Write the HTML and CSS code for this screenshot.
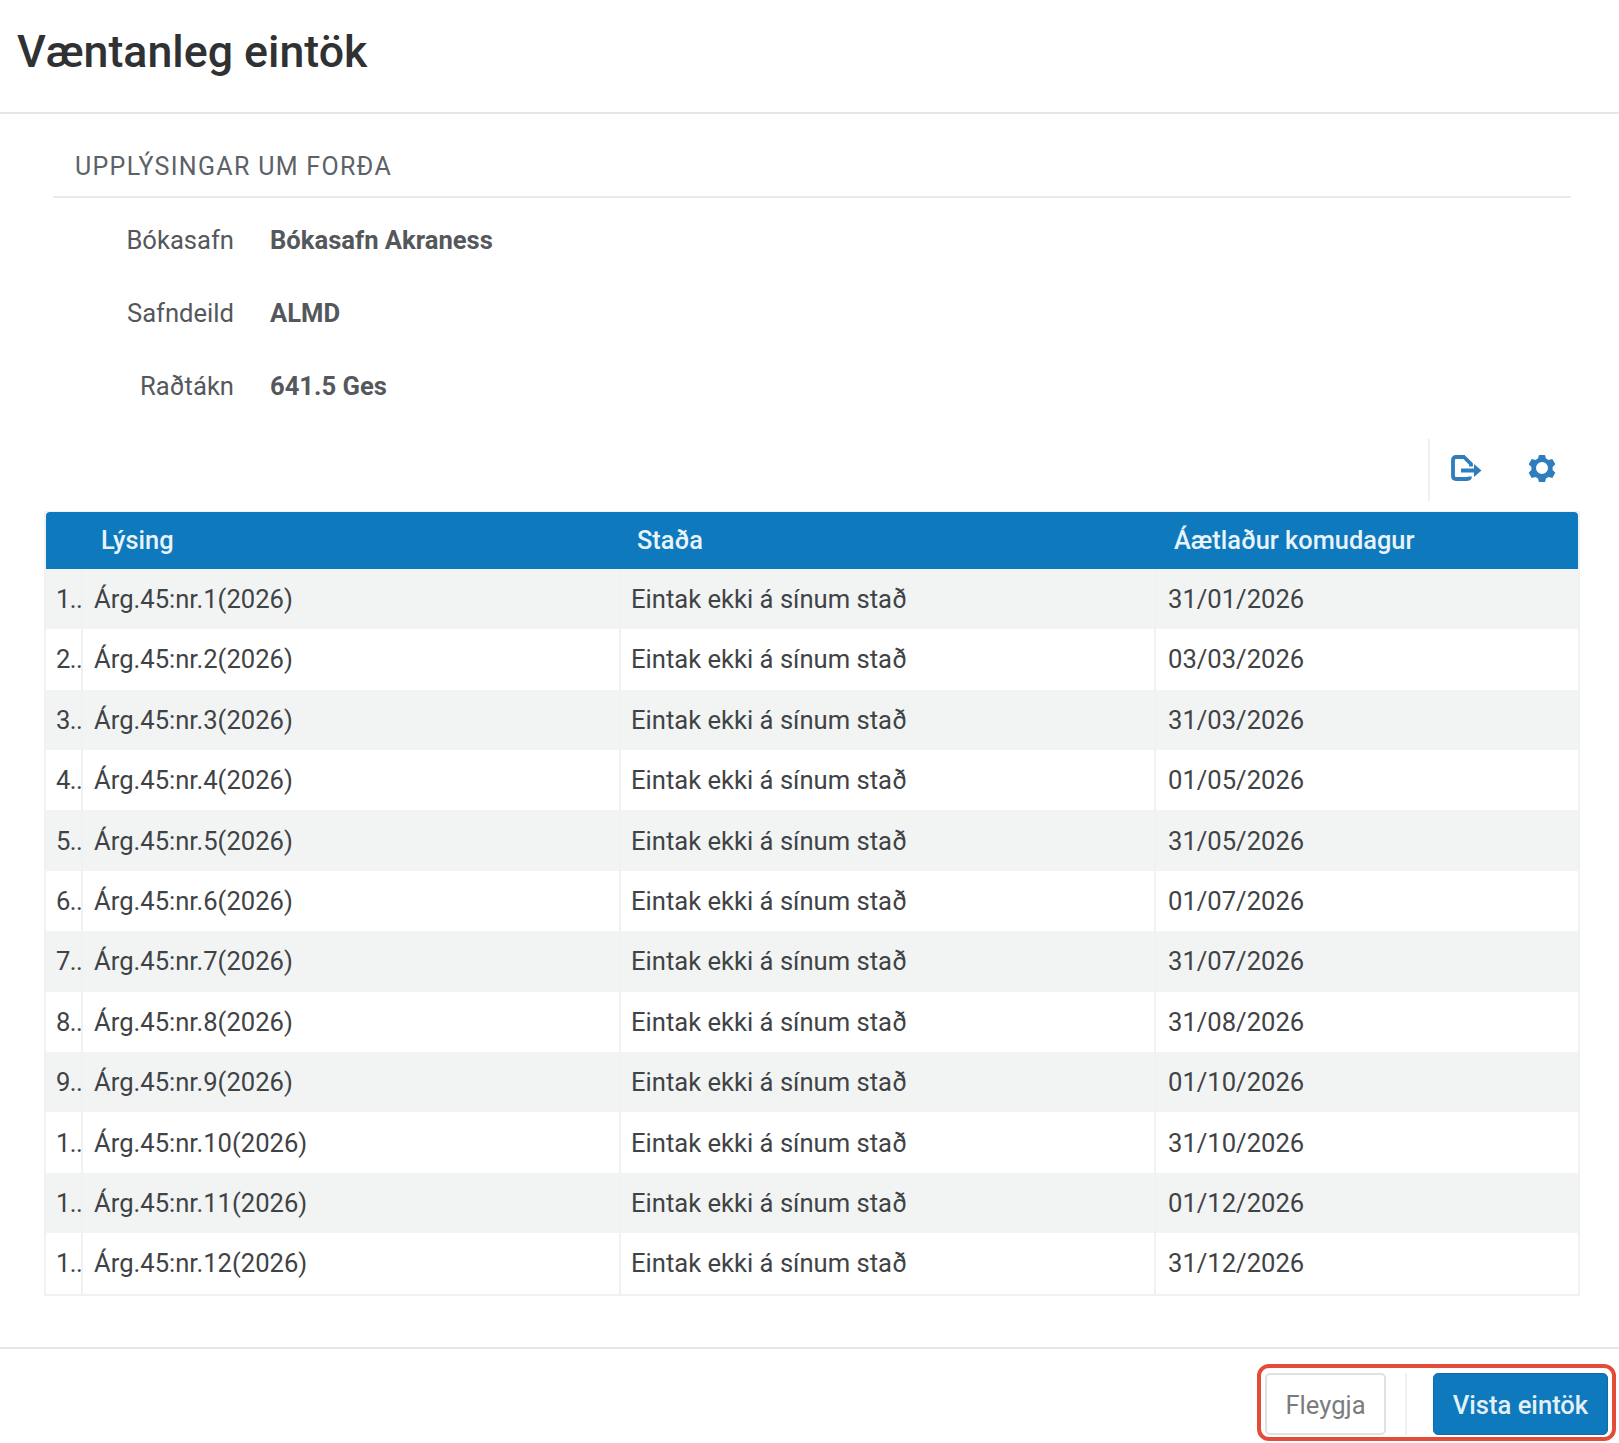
FILE: index.html
```html
<!DOCTYPE html>
<html lang="is">
<head>
<meta charset="utf-8">
<title>Væntanleg eintök</title>
<link rel="stylesheet" href="styles.css">
</head>
<body>
<div class="dialog">
  <header class="head"><h1>Væntanleg eintök</h1></header>
  <main class="content">
    <section class="info">
      <h2>UPPLÝSINGAR UM FORÐA</h2>
      <dl class="fields">
        <div class="field"><dt>Bókasafn</dt><dd>Bókasafn Akraness</dd></div>
        <div class="field"><dt>Safndeild</dt><dd>ALMD</dd></div>
        <div class="field"><dt>Raðtákn</dt><dd>641.5 Ges</dd></div>
      </dl>
    </section>
    <div class="toolbar">
      <div class="tools">
        <svg class="icon" viewBox="0 0 32 28" width="32" height="28" aria-hidden="true"><path d="M15 3H6Q3 3 3 6V22Q3 25 6 25H17Q20 25 20 22.500" fill="none" stroke="#2f7dbd" stroke-width="3.800"/><path d="M14 3 21 10V12.500" fill="none" stroke="#2f7dbd" stroke-width="3.800"/><path d="M11 14.500H24V10L31.500 16.500 24 23V18.500H11Z" fill="#2f7dbd"/></svg>
        <svg class="icon gear" viewBox="0 0 28 28" width="28" height="28" aria-hidden="true"><path fill="#2f7dbd" fill-rule="evenodd" d="M11 1h6l1 3.600 2.600 1.500 3.700-1 3 5.200-2.700 2.600v3.200l2.700 2.600-3 5.200-3.700-1-2.600 1.500-1 3.600h-6l-1-3.600-2.600-1.500-3.700 1-3-5.200 2.700-2.600v-3.200l-2.700-2.600 3-5.200 3.700 1 2.600-1.500zM14 8a6 6 0 1 0 0 12 6 6 0 0 0 0-12z"/></svg>
      </div>
    </div>
    <div class="grid">
      <div class="row header"><span class="c num"></span><span class="c">Lýsing</span><span class="c">Staða</span><span class="c">Áætlaður komudagur</span></div>
      <div class="row"><span class="c num">1..</span><span class="c">Árg.45:nr.1(2026)</span><span class="c">Eintak ekki á sínum stað</span><span class="c">31/01/2026</span></div>
      <div class="row"><span class="c num">2..</span><span class="c">Árg.45:nr.2(2026)</span><span class="c">Eintak ekki á sínum stað</span><span class="c">03/03/2026</span></div>
      <div class="row"><span class="c num">3..</span><span class="c">Árg.45:nr.3(2026)</span><span class="c">Eintak ekki á sínum stað</span><span class="c">31/03/2026</span></div>
      <div class="row"><span class="c num">4..</span><span class="c">Árg.45:nr.4(2026)</span><span class="c">Eintak ekki á sínum stað</span><span class="c">01/05/2026</span></div>
      <div class="row"><span class="c num">5..</span><span class="c">Árg.45:nr.5(2026)</span><span class="c">Eintak ekki á sínum stað</span><span class="c">31/05/2026</span></div>
      <div class="row"><span class="c num">6..</span><span class="c">Árg.45:nr.6(2026)</span><span class="c">Eintak ekki á sínum stað</span><span class="c">01/07/2026</span></div>
      <div class="row"><span class="c num">7..</span><span class="c">Árg.45:nr.7(2026)</span><span class="c">Eintak ekki á sínum stað</span><span class="c">31/07/2026</span></div>
      <div class="row"><span class="c num">8..</span><span class="c">Árg.45:nr.8(2026)</span><span class="c">Eintak ekki á sínum stað</span><span class="c">31/08/2026</span></div>
      <div class="row"><span class="c num">9..</span><span class="c">Árg.45:nr.9(2026)</span><span class="c">Eintak ekki á sínum stað</span><span class="c">01/10/2026</span></div>
      <div class="row"><span class="c num">1..</span><span class="c">Árg.45:nr.10(2026)</span><span class="c">Eintak ekki á sínum stað</span><span class="c">31/10/2026</span></div>
      <div class="row"><span class="c num">1..</span><span class="c">Árg.45:nr.11(2026)</span><span class="c">Eintak ekki á sínum stað</span><span class="c">01/12/2026</span></div>
      <div class="row"><span class="c num">1..</span><span class="c">Árg.45:nr.12(2026)</span><span class="c">Eintak ekki á sínum stað</span><span class="c">31/12/2026</span></div>
    </div>
  </main>
  <footer class="foot">
    <div class="actions">
      <button class="btn ghost">Fleygja</button>
      <span class="sep"></span>
      <button class="btn primary">Vista eintök</button>
    </div>
  </footer>
</div>
</body>
</html>
```

FILE: styles.css
```css
* { box-sizing: border-box; }
html, body { margin: 0; padding: 0; background: #fff; }
body { font-family: Roboto, "Liberation Sans", sans-serif; color: #3b3f42; height: 1443px; overflow: hidden; }
.dialog { display: flex; flex-direction: column; height: 1443px; }
.head { height: 114px; border-bottom: 2px solid #e3e7ea; padding: 0 17px; display: flex; align-items: center; }
.head h1 { margin: 0 0 6px; font-size: 44.7px; font-weight: 500; color: #2f3133; line-height: 1.2; }
.content { flex: 1; padding: 0 39px 0 44px; }
.info { padding: 0 9px; }
.info h2 { margin: 0; padding: 38px 0 0 22px; height: 84px; border-bottom: 2px solid #e8ebed; font-size: 25px; font-weight: 400; letter-spacing: 1.3px; color: #5c6267; line-height: 30px; }
.fields { margin: 0; padding-top: 5px; }
.field { display: flex; height: 73.3px; align-items: center; font-size: 25.6px; }
.field dt { width: 181px; text-align: right; color: #54585c; }
.field dd { margin: 0 0 0 36px; font-weight: 700; color: #54585c; }
.toolbar { display: flex; justify-content: flex-end; height: 67px; margin-top: 16px; }
.tools { display: flex; align-items: center; width: 152px; border-left: 2px solid #eef0f2; padding: 0 0 4px 20px; gap: 46px; height: 62px; }
.icon { display: block; }
.grid { border: 2px solid #f0f2f2; border-top-width: 1px; margin-top: 5px; }
.row { display: grid; grid-template-columns: 35px 538px 535px 1fr; height: 60.4px; align-items: stretch; font-size: 25.6px; color: #3f4346; }
.row:nth-child(even) { background: #f2f4f4; }
.row .c { display: flex; align-items: center; padding-left: 12px; border-left: 2px solid #f0f2f2; white-space: nowrap; }
.row .c:first-child { border-left: 0; }
.row .c:nth-child(2) { padding-left: 11px; }
.row .c:nth-child(3) { padding-left: 10px; }
.row .num { padding-left: 10px; letter-spacing: -0.6px; }
.row.header { height: 57px; background: #0e7abd; color: #e9f3fa; font-size: 25.4px; font-weight: 500; border-radius: 4px 4px 0 0; }
.row.header .c { border-left: 0; padding-left: 20px; }
.row.header .c:nth-child(2) { padding-left: 20px; }
.row.header .c:nth-child(3) { padding-left: 18px; }
.foot { height: 96px; border-top: 2px solid #e3e7ea; display: flex; justify-content: flex-end; align-items: flex-start; padding: 15px 3px 0 0; }
.actions { display: flex; align-items: flex-start; height: 77px; border: 4px solid #e34c38; border-radius: 12px; padding: 5px 4px 0; }
.btn { font-family: inherit; font-size: 25.6px; height: 62px; padding: 2px 0 0; border-radius: 5px; cursor: pointer; }
.btn.ghost { width: 121px; background: #fff; border: 2px solid #dfe1e2; color: #7a7d7f; }
.sep { width: 2px; height: 62px; background: #eef0f1; margin: 0 26px 0 19px; }
.btn.primary { width: 175px; background: #0e7abd; border: 1px solid #0e6ba8; color: #e4f0f8; font-weight: 500; }
```
